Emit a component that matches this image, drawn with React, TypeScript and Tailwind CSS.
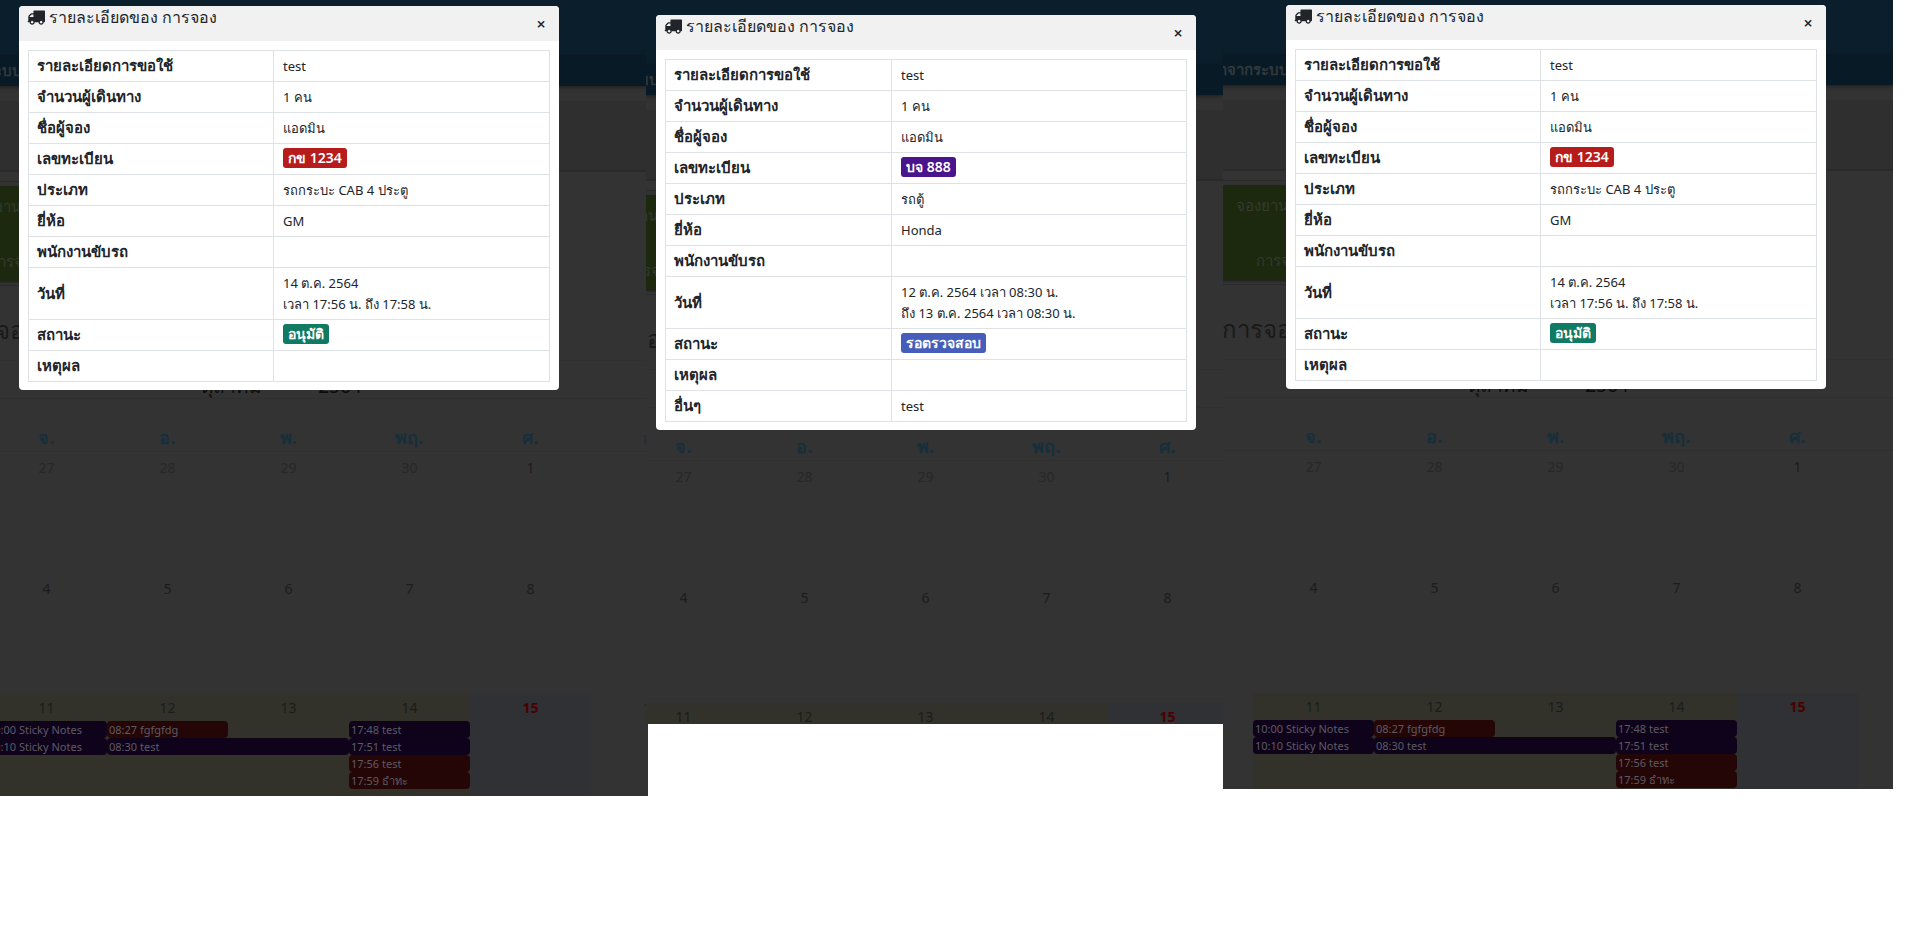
interface Row {
  label: string;
  value?: string;
  extra?: string;
  badge?: string;
}

interface ShotProps {
  shot: string;
  scroll: string;
  top: string;
  lastWeek: string;
  dialog: string;
  labelWidth: string;
  rows: Row[];
}

const pickup: Row[] = [
  { label: 'รายละเอียดการขอใช้', value: 'test' },
  { label: 'จำนวนผู้เดินทาง', value: '1 คน' },
  { label: 'ชื่อผู้จอง', value: 'แอดมิน' },
  { label: 'เลขทะเบียน', value: 'กข 1234', badge: 'bg-[#b71c1c]' },
  { label: 'ประเภท', value: 'รถกระบะ CAB 4 ประตู' },
  { label: 'ยี่ห้อ', value: 'GM' },
  { label: 'พนักงานขับรถ' },
  { label: 'วันที่', value: '14 ต.ค. 2564', extra: 'เวลา 17:56 น. ถึง 17:58 น.' },
  { label: 'สถานะ', value: 'อนุมัติ', badge: 'bg-[#117a63]' },
  { label: 'เหตุผล' },
];

const van: Row[] = [
  { label: 'รายละเอียดการขอใช้', value: 'test' },
  { label: 'จำนวนผู้เดินทาง', value: '1 คน' },
  { label: 'ชื่อผู้จอง', value: 'แอดมิน' },
  { label: 'เลขทะเบียน', value: 'บจ 888', badge: 'bg-[#4a148c]' },
  { label: 'ประเภท', value: 'รถตู้' },
  { label: 'ยี่ห้อ', value: 'Honda' },
  { label: 'พนักงานขับรถ' },
  { label: 'วันที่', value: '12 ต.ค. 2564 เวลา 08:30 น.', extra: 'ถึง 13 ต.ค. 2564 เวลา 08:30 น.' },
  { label: 'สถานะ', value: 'รอตรวจสอบ', badge: 'bg-[#465dbb]' },
  { label: 'เหตุผล' },
  { label: 'อื่นๆ', value: 'test' },
];

const days = ['อา.', 'จ.', 'อ.', 'พ.', 'พฤ.', 'ศ.', 'ส.'];

const events = [
  { text: '10:00 Sticky Notes', place: 'col-start-2 row-start-1 bg-[#0f031c]' },
  { text: '08:27 fgfgfdg', place: 'col-start-3 row-start-1 bg-[#250606]' },
  { text: '17:48 test', place: 'col-start-5 row-start-1 bg-[#0f031c]' },
  { text: '10:10 Sticky Notes', place: 'col-start-2 row-start-2 bg-[#0f031c]' },
  { text: '08:30 test', place: 'col-start-3 col-span-2 row-start-2 bg-[#0f031c]' },
  { text: '17:51 test', place: 'col-start-5 row-start-2 bg-[#0f031c]' },
  { text: '17:56 test', place: 'col-start-5 row-start-3 bg-[#250606]' },
  { text: '17:59 ธำทะ', place: 'col-start-5 row-start-4 bg-[#250606]' },
];

function TruckIcon() {
  return (
    <svg viewBox="0 0 1792 1792" className="h-[18px] w-[18px] shrink-0 fill-current" aria-hidden="true">
      <path d="M640 1408q0-52-38-90t-90-38-90 38-38 90 38 90 90 38 90-38 38-90zm-384-512h384v-256h-158q-13 0-22 9l-195 195q-9 9-9 22v30zm1280 512q0-52-38-90t-90-38-90 38-38 90 38 90 90 38 90-38 38-90zm256-1088v1024q0 15-4 26.5t-13.5 18.5-16.5 11.5-23.5 6-22.5 2-25.5 0-22.5-.5q0 106-75 181t-181 75-181-75-75-181h-384q0 106-75 181t-181 75-181-75-75-181h-64q-3 0-22.5.5t-25.5 0-22.5-2-23.5-6-16.5-11.5-13.5-18.5-4-26.5q0-26 19-45t45-19v-320q0-8-.5-35t0-38 2.5-34.5 6.5-37 14-30.5 22.5-30l198-198q19-19 50.5-32t58.5-13h160v-192q0-26 19-45t45-19h1024q26 0 45 19t19 45z" />
    </svg>
  );
}

function Dialog({ rows, labelWidth }: { rows: Row[]; labelWidth: string }) {
  return (
    <div role="dialog" aria-label="รายละเอียดของ การจอง" className="overflow-hidden rounded-[4px] bg-white text-[#212529]">
      <header className="flex h-[35px] items-start justify-between bg-[#f1f1f1] pl-2 pr-3">
        <h2 className="flex items-center gap-1 text-base leading-[22px]">
          <TruckIcon />
          รายละเอียดของ การจอง
        </h2>
        <button aria-label="ปิด" className="mt-2 w-3 text-base font-semibold leading-5">
          ×
        </button>
      </header>
      <div className="px-[9px] pt-[9px] pb-2">
        <table className="w-full table-fixed border-collapse text-left leading-[21px]">
          <tbody>
            {rows.map((row) => (
              <tr key={row.label}>
                <th className={`border border-[#dee2e6] px-2 pt-1 pb-[5px] text-[15px] font-semibold ${labelWidth}`}>
                  {row.label}
                </th>
                {row.badge ? (
                  <td className="border border-[#dee2e6] px-[9px] pt-1 pb-[5px] text-[13px]">
                    <span className={`inline-block rounded-[3px] px-[5px] align-top text-sm font-semibold leading-5 text-white ${row.badge}`}>
                      {row.value}
                    </span>
                  </td>
                ) : (
                  <td className="border border-[#dee2e6] px-[9px] pt-[5px] pb-1 text-[13px]">
                    {row.value}
                    {row.extra && <div>{row.extra}</div>}
                  </td>
                )}
              </tr>
            ))}
          </tbody>
        </table>
      </div>
    </div>
  );
}

function Week({ dates, muted = 0 }: { dates: number[]; muted?: number }) {
  return (
    <div className="grid grid-cols-7 text-center text-sm leading-[27px]">
      {dates.map((d, i) => (
        <span
          key={d}
          className={d === 15 ? 'font-bold text-[#4a0000]' : i < muted ? 'text-[#272727]' : 'text-[#1c1c1c]'}
        >
          {d}
        </span>
      ))}
    </div>
  );
}

function Shot({ shot, scroll, top, lastWeek, dialog, labelWidth, rows }: ShotProps) {
  return (
    <section className={`relative overflow-hidden bg-[#333333] ${shot}`}>
      <div className={scroll}>
        {/* Site header */}
        <div className={`bg-[#0a1e2b] ${top}`} />
        <nav className="flex h-[31px] items-center bg-[#081a25] pl-[68px] text-[15px] font-semibold text-[#30383c] shadow-[0_1px_4px_#1c1c1c]">
          <a href="#logout">ออกจากระบบ</a>
        </nav>
        <div className="h-[15px]" />
        <div className="h-[71px] border-b-2 border-[#2a2a2a] bg-[#2f2f2f]" />

        {/* Menu card */}
        <div className="mt-[9px] w-[220px] border-y border-[#2a2a2a] pt-1">
          <div className="flex h-[95px] flex-col justify-between bg-[#1c290e] py-2 text-[15px] font-medium leading-6 text-[#363a30] shadow-[0_1px_2px_#1c1c1c]">
            <a href="#booking" className="pl-[104px]">จองยานพาหนะ</a>
            <a href="#list" className="pl-[124px]">การจอง</a>
          </div>
          <div className="h-1" />
        </div>

        <h3 className="mt-6 pl-[90px] text-2xl leading-10 text-[#191919]">การจอง</h3>
        <div className="mt-2.5 flex h-[38px] w-[847px] items-end justify-center gap-14 border-t border-[#303030] pr-3.5 text-[19px] leading-6 text-[#0c0c0c]">
          <span>ตุลาคม</span>
          <span>2564</span>
        </div>

        {/* Calendar */}
        <div className="w-[847px]">
          <div className="grid h-[54px] grid-cols-7 border-y border-[#2f2f2f] pt-6 text-center text-lg font-bold leading-7 text-[#162f3b]">
            {days.map((d) => (
              <span key={d}>{d}</span>
            ))}
          </div>
          <div className="h-[121px] pt-0.5">
            <Week dates={[26, 27, 28, 29, 30, 1, 2]} muted={5} />
          </div>
          <div className="h-[121px] pt-0.5">
            <Week dates={[3, 4, 5, 6, 7, 8, 9]} />
          </div>
          <div className={`overflow-hidden ${lastWeek}`}>
            <div className="h-full bg-linear-[90deg,#333333_121px,#32322a_121px,#32322a_605px,#303134_605px,#303134_726px,#333333_726px]">
              <Week dates={[10, 11, 12, 13, 14, 15, 16]} />
              <div className="grid grid-cols-7 text-[11px] leading-[17px] text-[#5e5a63]">
                {events.map((e) => (
                  <span key={e.text} className={`truncate rounded-[4px] px-0.5 ${e.place}`}>
                    {e.text}
                  </span>
                ))}
              </div>
            </div>
          </div>
        </div>
      </div>

      <div className={`absolute w-[540px] ${dialog}`}>
        <Dialog rows={rows} labelWidth={labelWidth} />
      </div>
    </section>
  );
}

export default function App() {
  return (
    <main className="grid min-h-dvh grid-cols-[648fr_575fr_670fr_21fr] items-start bg-white font-['Noto_Sans',sans-serif]">
      <Shot
        shot=""
        scroll="-ml-[135px]"
        top="h-[55px]"
        lastWeek="h-[102px]"
        dialog="left-[19px] top-1.5"
        labelWidth="w-[245px]"
        rows={pickup}
      />
      <Shot
        shot="-ml-0.5"
        scroll="-ml-36"
        top="h-16"
        lastWeek="h-[21px]"
        dialog="left-2.5 top-[15px]"
        labelWidth="w-[226px]"
        rows={van}
      />
      <Shot
        shot=""
        scroll="-ml-[91px]"
        top="h-[54px]"
        lastWeek="h-24"
        dialog="left-[63px] top-[5px]"
        labelWidth="w-[245px]"
        rows={pickup}
      />
    </main>
  );
}
